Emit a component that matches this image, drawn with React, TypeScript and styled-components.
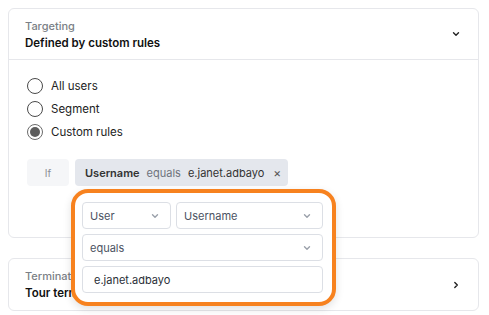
import styled, { createGlobalStyle } from "styled-components";

const GlobalStyle = createGlobalStyle`
  body {
    margin: 0;
    background: #ffffff;
    font-family: Inter, "Noto Sans", "Liberation Sans", sans-serif;
    color: #1a1a1a;
  }
`;

const Page = styled.main`
  display: flex;
  flex-direction: column;
  gap: 20px;
  padding: 8px 10px 8px 8px;
`;

const Card = styled.section`
  border: 1px solid #e6e7eb;
  border-radius: 6px;
  background: #fff;
`;

const CardHeader = styled.div<{ divided?: boolean }>`
  display: flex;
  align-items: center;
  justify-content: space-between;
  padding: 0 17px 0 16px;
  height: ${(p) => (p.divided ? "50px" : "51px")};
  border-bottom: ${(p) => (p.divided ? "1px solid #e6e7eb" : "none")};
`;

const HeaderText = styled.div`
  display: flex;
  flex-direction: column;
  gap: 3px;
`;

const Overline = styled.span`
  font-size: 11px;
  color: #7b7f86;
  font-weight: 500;
`;

const Heading = styled.span`
  font-size: 11.5px;
  font-weight: 600;
  color: #111;
`;

const CardBody = styled.div`
  padding: 18px 18px 51px 18px;
`;

const RadioList = styled.div`
  display: flex;
  flex-direction: column;
  gap: 7px;
`;

const RadioRow = styled.label`
  display: flex;
  align-items: center;
  gap: 8px;
  font-size: 11.5px;
  color: #222;
  height: 16px;
`;

const RadioCircle = styled.span<{ checked?: boolean }>`
  width: 14px;
  height: 14px;
  border-radius: 50%;
  border: 1.5px solid ${(p) => (p.checked ? "#6b6b6b" : "#4a4a4a")};
  display: flex;
  align-items: center;
  justify-content: center;
  box-sizing: content-box;
  &::after {
    content: "";
    width: 10px;
    height: 10px;
    border-radius: 50%;
    background: ${(p) => (p.checked ? "#5d5d5d" : "transparent")};
  }
`;

const ConditionRow = styled.div`
  display: flex;
  gap: 6px;
  margin-top: 19px;
`;

const IfBox = styled.div`
  width: 42px;
  height: 27px;
  border-radius: 4px;
  background: #f5f6f8;
  color: #8a8e96;
  font-size: 10px;
  display: flex;
  align-items: center;
  justify-content: center;
`;

const ChipWrap = styled.div`
  position: relative;
`;

const Chip = styled.div`
  height: 27px;
  width: 213px;
  box-sizing: border-box;
  border-radius: 4px;
  background: #e4e7ed;
  display: flex;
  align-items: center;
  padding: 0 10px;
  gap: 7px;
  font-size: 11px;
`;

const ChipStrong = styled.span`
  font-weight: 600;
  color: #333;
`;

const ChipMuted = styled.span`
  color: #6e737c;
`;

const ChipValue = styled.span`
  color: #333;
`;

const Close = styled.span`
  margin-left: 2px;
  color: #555;
  font-size: 12px;
`;

const Popover = styled.div`
  position: absolute;
  top: 30px;
  left: -4px;
  width: 265px;
  box-sizing: border-box;
  background: #fff;
  border: 4px solid #f7821f;
  border-radius: 17px;
  padding: 9px 9px 9px 7px;
  display: flex;
  flex-direction: column;
  gap: 5px;
  box-shadow: 0 3px 8px rgba(0, 0, 0, 0.12);
  z-index: 2;
`;

const FieldRow = styled.div`
  display: flex;
  gap: 5px;
`;

const Field = styled.div<{ w?: number }>`
  height: 27px;
  box-sizing: border-box;
  flex: ${(p) => (p.w ? `0 0 ${p.w}px` : "1 1 auto")};
  border: 1px solid #dcdfe5;
  border-radius: 4px;
  display: flex;
  align-items: center;
  justify-content: space-between;
  padding: 0 10px 0 7px;
  font-size: 11px;
  color: #4b5262;
`;

const InputText = styled.span`
  padding-left: 4px;
  color: #2a2f38;
`;

const Chevron = ({ dir = "down", color = "#222", size = 10 }: { dir?: "down" | "right"; color?: string; size?: number }) => (
  <svg width={size} height={size} viewBox="0 0 10 10" fill="none">
    {dir === "down" ? (
      <path d="M2.5 3.8 L5 6.3 L7.5 3.8" stroke={color} strokeWidth="1.4" strokeLinecap="round" strokeLinejoin="round" />
    ) : (
      <path d="M3.8 2.5 L6.3 5 L3.8 7.5" stroke={color} strokeWidth="1.4" strokeLinecap="round" strokeLinejoin="round" />
    )}
  </svg>
);

export default function App() {
  return (
    <Page>
      <GlobalStyle />
      <Card>
        <CardHeader divided>
          <HeaderText>
            <Overline>Targeting</Overline>
            <Heading>Defined by custom rules</Heading>
          </HeaderText>
          <Chevron />
        </CardHeader>
        <CardBody>
          <RadioList>
            <RadioRow>
              <RadioCircle />
              All users
            </RadioRow>
            <RadioRow>
              <RadioCircle />
              Segment
            </RadioRow>
            <RadioRow>
              <RadioCircle checked />
              Custom rules
            </RadioRow>
          </RadioList>
          <ConditionRow>
            <IfBox>If</IfBox>
            <ChipWrap>
              <Chip>
                <ChipStrong>Username</ChipStrong>
                <ChipMuted>equals</ChipMuted>
                <ChipValue>e.janet.adbayo</ChipValue>
                <Close>×</Close>
              </Chip>
              <Popover>
                <FieldRow>
                  <Field w={89}>
                    User
                    <Chevron color="#9aa0aa" />
                  </Field>
                  <Field>
                    Username
                    <Chevron color="#9aa0aa" />
                  </Field>
                </FieldRow>
                <Field>
                  equals
                  <Chevron color="#9aa0aa" />
                </Field>
                <Field>
                  <InputText>e.janet.adbayo</InputText>
                </Field>
              </Popover>
            </ChipWrap>
          </ConditionRow>
        </CardBody>
      </Card>
      <Card>
        <CardHeader>
          <HeaderText>
            <Overline>Termination</Overline>
            <Heading>Tour terminates when finished</Heading>
          </HeaderText>
          <Chevron dir="right" />
        </CardHeader>
      </Card>
    </Page>
  );
}
